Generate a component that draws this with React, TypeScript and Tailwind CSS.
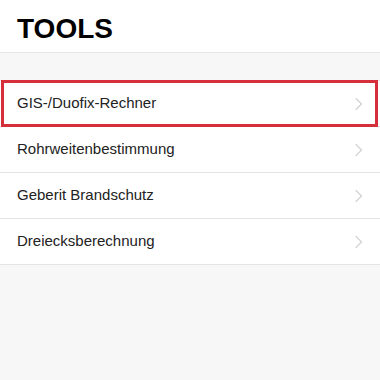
const tools = [
  "GIS-/Duofix-Rechner",
  "Rohrweitenbestimmung",
  "Geberit Brandschutz",
  "Dreiecksberechnung",
];

function Chevron() {
  return (
    <svg width="8" height="14" viewBox="0 0 8 14" fill="none">
      <path d="M1 1.5l5.5 5.5-5.5 5.5" stroke="#d4d4d8" strokeWidth="1.4" strokeLinecap="round" strokeLinejoin="round" />
    </svg>
  );
}

export default function App() {
  return (
    <div className="min-h-screen bg-[#f7f7f7] font-['Liberation_Sans',Arial,sans-serif]">
      <header className="h-[53px] bg-white border-b border-[#e6e6e6] px-[17px] flex items-center">
        <h1 className="text-[28px] font-bold text-black leading-none pt-[6px]">TOOLS</h1>
      </header>

      <ul className="mt-[27px] bg-white border-t border-[#e6e6e6]">
        {tools.map((name, i) => (
          <li
            key={name}
            className="relative h-[46px] border-b border-[#e4e4e4] pl-[17px] pr-[17px] flex items-center justify-between"
          >
            <span className="text-[15px] text-[#222]">{name}</span>
            <Chevron />
            {i === 0 && (
              <div className="absolute left-[1px] right-[2px] top-[-1px] bottom-[-1px] border-[3px] border-[#d52f3b] pointer-events-none" />
            )}
          </li>
        ))}
      </ul>
    </div>
  );
}
